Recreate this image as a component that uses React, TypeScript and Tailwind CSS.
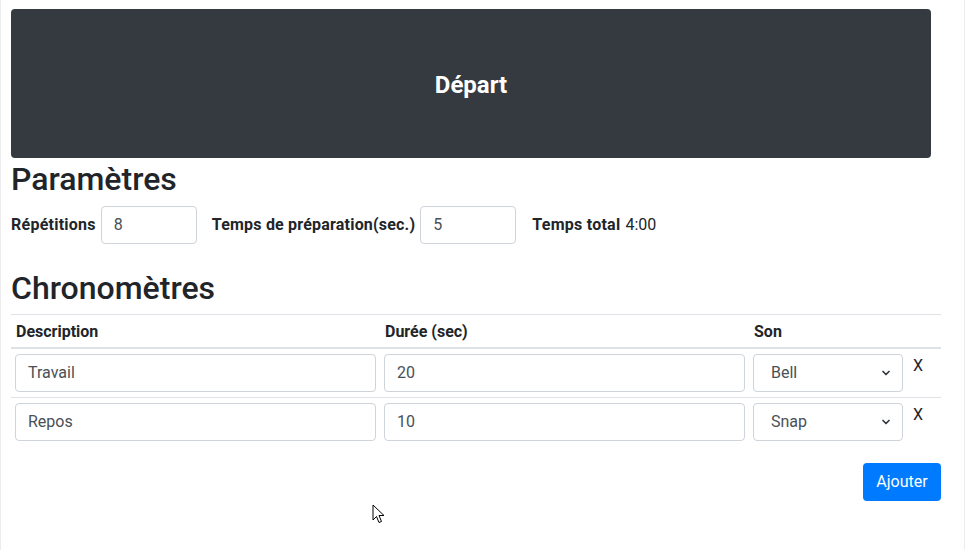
import { ChevronDown } from "lucide-react";

const font = { fontFamily: '"Segoe UI", Roboto, "Noto Sans", "Liberation Sans", sans-serif' };

type Chrono = { description: string; duree: number; son: string };

const chronos: Chrono[] = [
  { description: "Travail", duree: 20, son: "Bell" },
  { description: "Repos", duree: 10, son: "Snap" },
];

function Field({ value, className = "" }: { value: string; className?: string }) {
  return (
    <div
      className={`h-[38px] flex items-center px-3 border border-[#ced4da] rounded bg-white text-base text-[#495057] ${className}`}
    >
      {value}
    </div>
  );
}

function Cursor() {
  return (
    <svg className="absolute left-[371px] top-[504px]" width="14" height="21" viewBox="0 0 14 21">
      <path d="M1 1 L1 16 L4.5 12.5 L7 18.5 L9.5 17.5 L7 11.5 L12 11.5 Z" fill="white" stroke="black" strokeWidth="1" strokeLinejoin="round" />
    </svg>
  );
}

export default function App() {
  return (
    <div className="relative w-[965px] h-[550px] bg-white text-[#212529] overflow-hidden border-x border-[#ececec]" style={font}>
      <div className="pl-[10px] pr-[23px] pt-[9px]">
        {/* Départ */}
        <button className="w-[920px] h-[149px] pt-[3px] bg-[#343a40] rounded text-white text-2xl font-bold">
          Départ
        </button>

        <h2 className="text-[32px] leading-[1.2] font-medium mt-[2px] mb-2">Paramètres</h2>

        {/* Paramètres */}
        <div className="flex items-center h-[38px] text-base">
          <span className="font-bold tracking-[0.25px]">Répétitions</span>
          <Field value="8" className="w-[96px] ml-[5px]" />
          <span className="font-bold tracking-[0.2px] ml-[15px]">Temps de préparation(sec.)</span>
          <Field value="5" className="w-[96px] ml-[5px]" />
          <span className="font-bold tracking-[0.25px] ml-[16px]">Temps total</span>
          <span className="ml-[5px]">4:00</span>
        </div>

        <h2 className="text-[32px] leading-[1.2] font-medium mt-[25px] mb-[6px]">Chronomètres</h2>

        {/* Chronomètres */}
        <table className="w-[930px] border-collapse table-fixed">
          <colgroup>
            <col className="w-[369px]" />
            <col className="w-[369px]" />
            <col className="w-[192px]" />
          </colgroup>
          <thead>
            <tr className="border-t border-b-2 border-t-[#dee2e6] border-b-[#dee2e6]">
              <th className="text-left font-bold px-[5px] pt-[2px] h-[34px]">Description</th>
              <th className="text-left font-bold px-[5px] pt-[2px]">Durée (sec)</th>
              <th className="text-left font-bold px-[5px] pt-[2px]">Son</th>
            </tr>
          </thead>
          <tbody>
            {chronos.map((c, i) => (
              <tr key={c.description} className={i > 0 ? "border-t border-[#dee2e6]" : ""}>
                <td className="p-[4px] pt-[5px] pb-[5px]">
                  <Field value={c.description} />
                </td>
                <td className="p-[4px] pt-[5px] pb-[5px]">
                  <Field value={String(c.duree)} />
                </td>
                <td className="p-[4px] pt-[5px] pb-[5px] align-top">
                  <div className="flex items-start">
                    <div className="w-[150px] h-[38px] flex items-center justify-between pl-[17px] pr-[10px] border border-[#ced4da] rounded bg-white text-[#495057]">
                      <span>{c.son}</span>
                      <ChevronDown size={12} strokeWidth={3.5} className="text-[#343a40]" />
                    </div>
                    <span className="ml-[10px] mt-[4px] leading-none text-base">X</span>
                  </div>
                </td>
              </tr>
            ))}
          </tbody>
        </table>

        <div className="w-[930px] flex justify-end mt-[17px]">
          <button className="bg-[#007bff] text-white text-base rounded px-3 h-[38px] w-[78px]">
            Ajouter
          </button>
        </div>
      </div>
      <Cursor />
    </div>
  );
}
